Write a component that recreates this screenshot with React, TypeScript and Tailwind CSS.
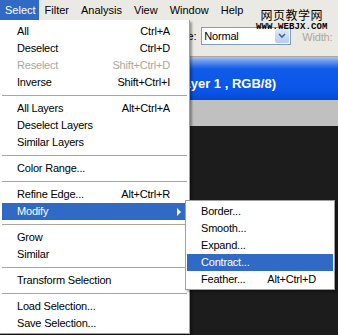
import React from 'react';

type Item =
  | { kind: 'sep' }
  | { kind: 'item'; label: string; keys?: string; disabled?: boolean; active?: boolean; sub?: boolean };

const mainItems: Item[] = [
  { kind: 'item', label: 'All', keys: 'Ctrl+A' },
  { kind: 'item', label: 'Deselect', keys: 'Ctrl+D' },
  { kind: 'item', label: 'Reselect', keys: 'Shift+Ctrl+D', disabled: true },
  { kind: 'item', label: 'Inverse', keys: 'Shift+Ctrl+I' },
  { kind: 'sep' },
  { kind: 'item', label: 'All Layers', keys: 'Alt+Ctrl+A' },
  { kind: 'item', label: 'Deselect Layers' },
  { kind: 'item', label: 'Similar Layers' },
  { kind: 'sep' },
  { kind: 'item', label: 'Color Range...' },
  { kind: 'sep' },
  { kind: 'item', label: 'Refine Edge...', keys: 'Alt+Ctrl+R' },
  { kind: 'item', label: 'Modify', active: true, sub: true },
  { kind: 'sep' },
  { kind: 'item', label: 'Grow' },
  { kind: 'item', label: 'Similar' },
  { kind: 'sep' },
  { kind: 'item', label: 'Transform Selection' },
  { kind: 'sep' },
  { kind: 'item', label: 'Load Selection...' },
  { kind: 'item', label: 'Save Selection...' },
];

const subItems: Item[] = [
  { kind: 'item', label: 'Border...' },
  { kind: 'item', label: 'Smooth...' },
  { kind: 'item', label: 'Expand...' },
  { kind: 'item', label: 'Contract...', active: true },
  { kind: 'item', label: 'Feather...', keys: 'Alt+Ctrl+D' },
];

const menuBar = ['Select', 'Filter', 'Analysis', 'View', 'Window', 'Help'];

function MenuRows({ items, pad }: { items: Item[]; pad: string }) {
  return (
    <>
      {items.map((it, i) =>
        it.kind === 'sep' ? (
          <div key={i} className="h-[9px] pt-[4px]">
            <div className="h-px bg-[#aca899]" />
          </div>
        ) : (
          <div
            key={i}
            className={`flex h-[17px] items-center ${pad} pr-[17px] ${
              it.active ? 'bg-[#316ac5] text-white' : it.disabled ? 'text-[#aca899]' : 'text-black'
            }`}
          >
            <span>{it.label}</span>
            {it.keys && <span className="ml-auto">{it.keys}</span>}
            {it.sub && (
              <svg className="ml-auto mr-[-12px]" width="5" height="8" viewBox="0 0 5 8">
                <path d="M0 0 L4 4 L0 8 Z" fill="white" />
              </svg>
            )}
          </div>
        )
      )}
    </>
  );
}

export default function App() {
  return (
    <div className="relative flex h-[335px] w-[338px] flex-col overflow-hidden bg-[#1c1c1c] font-['Liberation_Sans',Arial,sans-serif] text-[11px] tracking-[-0.2px]">
      {/* Menu bar */}
      <div className="flex h-[20px] items-stretch bg-[#ebe9e3] tracking-normal text-black">
        {menuBar.map((m, i) => (
          <div
            key={m}
            className={`flex items-center ${i === 0 ? 'bg-[#316ac5] pl-[5px] pr-[3px] text-white' : 'px-[6px]'}`}
          >
            {m}
          </div>
        ))}
      </div>

      {/* Options bar */}
      <div className="flex h-[37px] items-center border-b border-[#a8a8a0] bg-[#ebe9e3] pb-[4px] leading-[11px]">
        <span className="ml-[170px] text-black">Style:</span>
        <div className="ml-[5px] flex h-[18px] w-[90px] items-center border border-[#7f9db9] bg-white pl-[2px]">
          <span className="flex-1 text-black">Normal</span>
          <div className="mr-px flex h-[14px] w-[14px] items-center justify-center rounded-[2px] bg-gradient-to-b from-[#dfe9fd] to-[#b6cbf5]">
            <svg width="8" height="6" viewBox="0 0 8 6">
              <path d="M1 1 L4 4 L7 1" stroke="#4d6185" strokeWidth="1.6" fill="none" />
            </svg>
          </div>
        </div>
        <span className="ml-[11px] mt-[2px] text-[#aca899]">Width:</span>
      </div>

      {/* Document title bar */}
      <div className="flex h-[43px] items-end justify-end bg-[linear-gradient(to_bottom,#a9c3f2_0px,#6d9af0_4px,#3a78ee_8px,#0f5bea_12px,#0a55e6_34px,#0449d4_43px)] pb-[7px] pr-[62px]">
        <span className="text-[13px] font-bold tracking-normal text-white">(Layer 1 , RGB/8)</span>
      </div>

      {/* Ruler / gray band */}
      <div className="h-[26px] bg-[#c0c0c0]" />

      {/* Canvas */}
      <div className="flex-1 bg-[#1c1c1c]" />

      {/* Watermark */}
      <div className="absolute left-[256px] top-[9px] flex flex-col items-center leading-none">
        <span className="font-['Noto_Sans_CJK_SC',sans-serif] text-[12px] tracking-[0.5px] text-black">网页教学网</span>
        <span className="mt-[2px] font-['Liberation_Mono',monospace] text-[9px] font-bold tracking-[0.1px] text-black">WWW.WEBJX.COM</span>
      </div>

      {/* Select menu */}
      <div className="absolute left-0 top-[20px] w-[190px] border-r border-b border-[#a0a0a0] bg-white pt-[3px] pb-px shadow-[2px_2px_2px_rgba(0,0,0,0.35)]">
        <div className="mx-[2px]">
          <MenuRows items={mainItems} pad="pl-[15px]" />
        </div>
      </div>

      {/* Modify submenu */}
      <div className="absolute left-[185px] top-[200px] w-[150px] border border-[#a0a0a0] bg-white pt-[2px] pb-px shadow-[2px_2px_2px_rgba(0,0,0,0.35)]">
        <div className="mx-px">
          <MenuRows items={subItems} pad="pl-[14px]" />
        </div>
      </div>
    </div>
  );
}
